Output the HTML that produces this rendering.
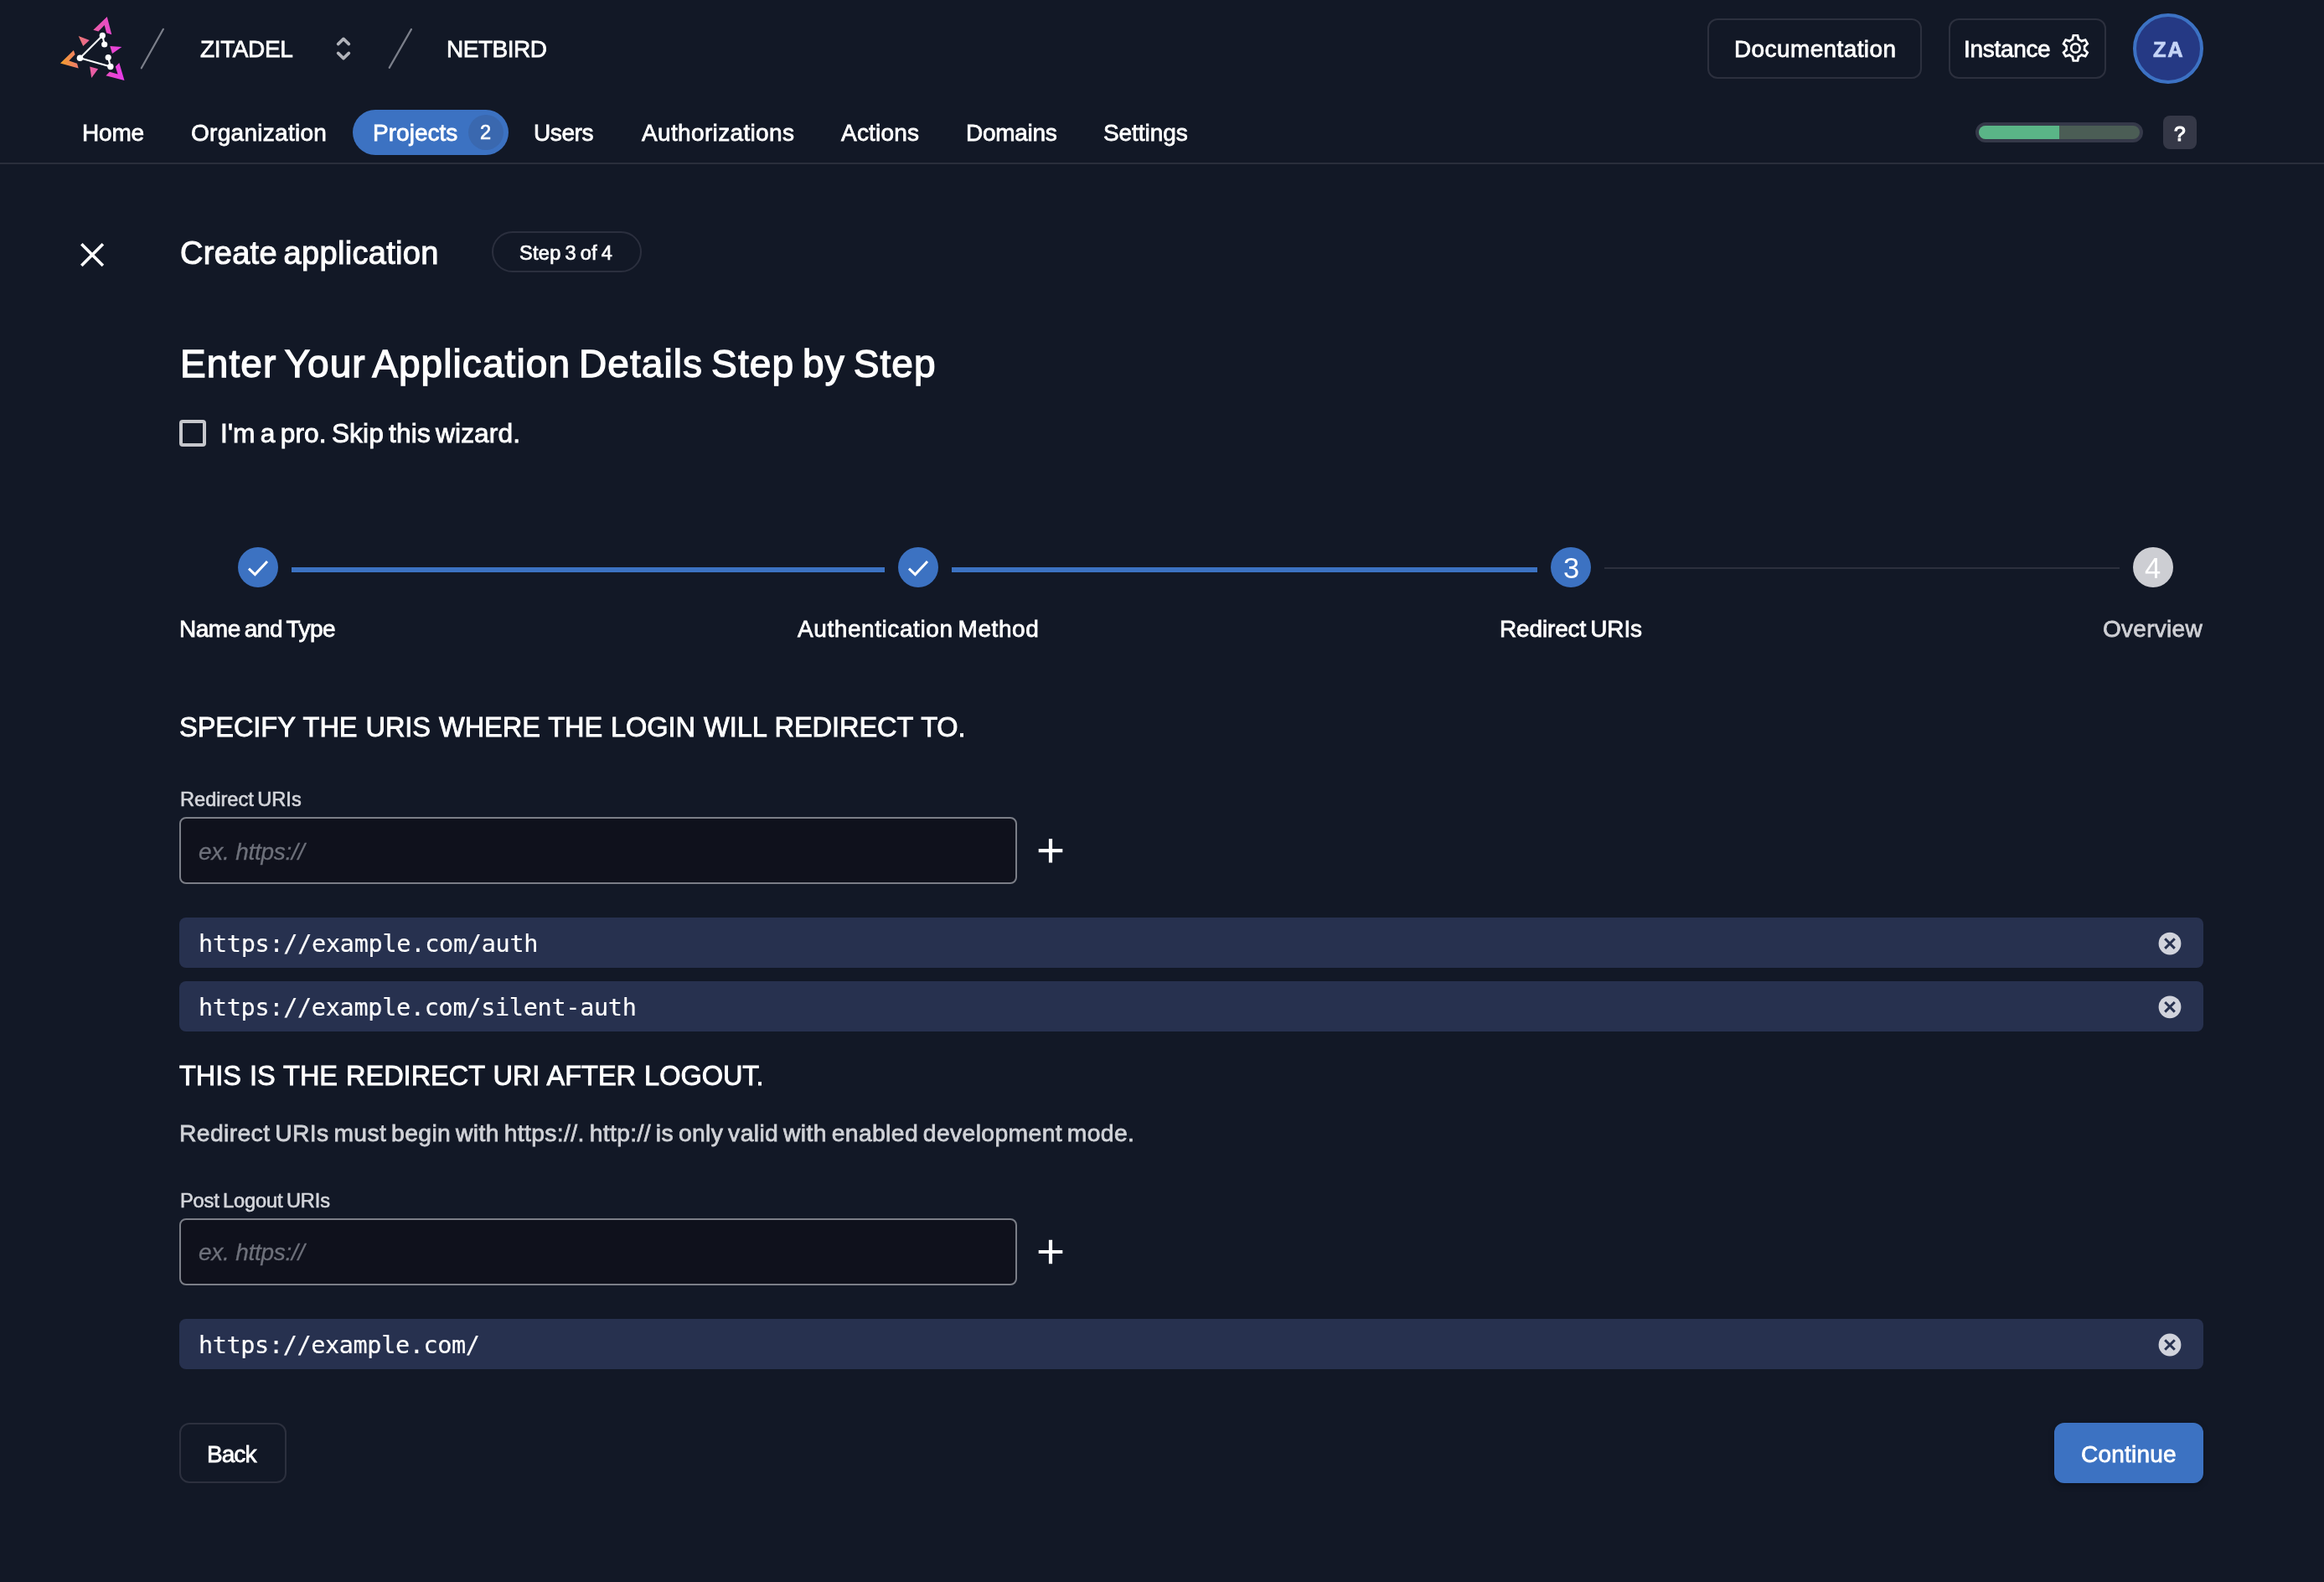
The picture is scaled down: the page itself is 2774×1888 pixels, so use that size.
<!DOCTYPE html>
<html lang="en">
<head>
<meta charset="utf-8">
<title>ZITADEL Console – Create application</title>
<style>
*{box-sizing:border-box;margin:0;padding:0}
html,body{width:2774px;height:1888px;overflow:hidden;background:#121826}
body{position:relative;font-family:"Liberation Sans",sans-serif;color:#fff;-webkit-font-smoothing:antialiased}
.abs,.t,svg.ic{position:absolute}
.t{white-space:nowrap;display:block;-webkit-text-stroke:0.6px currentColor;will-change:transform}
a{color:inherit;text-decoration:none}
h1,h2,h3,p,label{font-weight:400;font-size:inherit}
svg.ic{left:0;top:0;overflow:visible;pointer-events:none}
/* header */
.btn-o{position:absolute;top:22px;height:72px;border:2px solid #2c303e;border-radius:12px;background:transparent}
#btn-doc{left:2038px;width:256px}
#btn-inst{left:2326px;width:188px}
#avatar{left:2546px;top:15.8px;width:84px;height:84px;border-radius:50%;border:4px solid #3c72c4;background:#253984}
#pill{left:421px;top:131px;width:186px;height:54px;border-radius:27px;background:#3c72c2;}
#badge{left:559px;top:136.6px;width:42px;height:42px;border-radius:50%;background:#3a68af}
#prog{left:2358px;top:146px;width:200px;height:24px;border-radius:12px;border:4px solid #353949;background:#4b5d55;overflow:hidden}
#prog i{display:block;width:50%;height:100%;background:#5ab587}
#helpbtn{left:2582px;top:138px;width:40px;height:40px;border-radius:8px;background:#353847}
#hline{left:0;top:194px;width:2774px;height:2px;background:#2a2e3b}
/* main */
#steppill{left:587px;top:276px;width:179px;height:49px;border-radius:25px;border:2px solid #2b2f3e}
#cbx{left:214px;top:501px;width:32px;height:32px;border-radius:4px;border:4px solid #c6c7cc}
.sc{position:absolute;top:653px;width:48px;height:48px;border-radius:50%;background:#3c72c2}
.sc.g{background:#cdced3}
.sl{position:absolute;top:677px;height:6px;background:#3c72c2}
.sl.g{height:2px;background:#2c303d}
.inp{position:absolute;left:214px;width:1000px;height:80px;border:2px solid #7b7e87;border-radius:8px;background:#0f111c}
.row{position:absolute;left:214px;width:2416px;height:60px;border-radius:8px;background:#27314f}
#btn-back{left:214px;top:1698px;width:128px;height:72px;border:2px solid #2c303e;border-radius:12px}
#btn-cont{left:2452px;top:1698px;width:178px;height:72px;border-radius:12px;background:#3c72c2;box-shadow:0 3px 7px rgba(0,0,0,.28)}
#org{left:239px;top:42px;font-size:28px;line-height:34px;letter-spacing:-0.376px;-webkit-text-stroke-width:0.76px;}
#proj{left:533px;top:42px;font-size:28px;line-height:34px;letter-spacing:-0.492px;-webkit-text-stroke-width:0.76px;}
#doc{left:2070px;top:42px;font-size:28px;line-height:34px;letter-spacing:0.389px;-webkit-text-stroke-width:0.76px;}
#inst{left:2344px;top:42px;font-size:28px;line-height:34px;letter-spacing:-0.308px;-webkit-text-stroke-width:0.76px;}
#ava{left:2570px;top:44px;font-size:25.5px;line-height:31px;letter-spacing:1.579px;font-weight:700;color:#c5d4f7;-webkit-text-stroke-width:0.69px;}
#n1{left:98px;top:142px;font-size:28px;line-height:34px;letter-spacing:-0.165px;-webkit-text-stroke-width:0.76px;}
#n2{left:228px;top:142px;font-size:28px;line-height:34px;letter-spacing:0.285px;-webkit-text-stroke-width:0.76px;}
#n3{left:445px;top:142px;font-size:28px;line-height:34px;letter-spacing:0.025px;-webkit-text-stroke-width:0.76px;}
#n3b{left:573px;top:144px;font-size:23.5px;line-height:28px;-webkit-text-stroke-width:0.63px;}
#n4{left:637px;top:142px;font-size:28px;line-height:34px;letter-spacing:-0.399px;-webkit-text-stroke-width:0.76px;}
#n5{left:766px;top:142px;font-size:28px;line-height:34px;letter-spacing:0.345px;-webkit-text-stroke-width:0.76px;}
#n6{left:1004px;top:142px;font-size:28px;line-height:34px;letter-spacing:0.200px;-webkit-text-stroke-width:0.76px;}
#n7{left:1153px;top:142px;font-size:28px;line-height:34px;letter-spacing:-0.293px;-webkit-text-stroke-width:0.76px;}
#n8{left:1317px;top:142px;font-size:28px;line-height:34px;letter-spacing:-0.064px;-webkit-text-stroke-width:0.76px;}
#help{left:2595px;top:145px;font-size:24.5px;line-height:29px;-webkit-text-stroke-width:1.20px;}
#title{left:215px;top:279px;font-size:38px;line-height:46px;letter-spacing:0.315px;-webkit-text-stroke-width:1.03px;word-spacing:-3.23px;}
#step{left:620px;top:288px;font-size:23.5px;line-height:28px;letter-spacing:0.314px;-webkit-text-stroke-width:0.70px;word-spacing:-2.00px;}
#h1{left:215px;top:407px;font-size:46px;line-height:55px;letter-spacing:1.080px;-webkit-text-stroke-width:1.30px;word-spacing:-3.91px;}
#pro{left:263px;top:498px;font-size:31.7px;line-height:38px;letter-spacing:0.097px;-webkit-text-stroke-width:0.86px;word-spacing:-2.69px;}
#s1{left:214px;top:734px;font-size:28px;line-height:34px;letter-spacing:-0.476px;-webkit-text-stroke-width:0.76px;word-spacing:-2.38px;}
#s2{left:952px;top:734px;font-size:28px;line-height:34px;letter-spacing:0.577px;-webkit-text-stroke-width:0.76px;word-spacing:-2.38px;}
#s3{left:1790px;top:734px;font-size:28px;line-height:34px;letter-spacing:-0.155px;-webkit-text-stroke-width:0.76px;word-spacing:-2.38px;}
#s4{left:2510px;top:734px;font-size:28px;line-height:34px;letter-spacing:0.279px;color:#cfd0d5;-webkit-text-stroke-width:0.76px;}
#c3{left:1866px;top:658px;font-size:34.5px;line-height:41px;-webkit-text-stroke-width:0.00px;}
#c4{left:2560px;top:658px;font-size:34.5px;line-height:41px;-webkit-text-stroke-width:0.00px;}
#sec1{left:214px;top:849px;font-size:32.5px;line-height:39px;letter-spacing:-0.037px;-webkit-text-stroke-width:0.88px;word-spacing:1.00px;}
#l1{left:215px;top:940px;font-size:23.6px;line-height:28px;letter-spacing:-0.013px;color:#d4d6db;-webkit-text-stroke-width:0.64px;word-spacing:-2.01px;}
#p1{left:237px;top:1000px;font-size:28px;line-height:34px;letter-spacing:-0.249px;font-style:italic;color:#6e717b;-webkit-text-stroke-width:0.30px;}
#u1{left:237px;top:1110px;font-size:28.5px;line-height:34px;letter-spacing:-0.275px;font-family:"DejaVu Sans Mono", "Liberation Mono", monospace;-webkit-text-stroke-width:0.15px;}
#u2{left:237px;top:1186px;font-size:28.5px;line-height:34px;letter-spacing:-0.301px;font-family:"DejaVu Sans Mono", "Liberation Mono", monospace;-webkit-text-stroke-width:0.15px;}
#sec2{left:214px;top:1265px;font-size:32.5px;line-height:39px;letter-spacing:-0.016px;-webkit-text-stroke-width:0.88px;word-spacing:1.00px;}
#desc{left:214px;top:1335px;font-size:28.3px;line-height:34px;letter-spacing:0.375px;color:#d0d2d7;-webkit-text-stroke-width:0.76px;word-spacing:-2.41px;}
#l2{left:215px;top:1419px;font-size:23.6px;line-height:28px;letter-spacing:-0.128px;color:#d4d6db;-webkit-text-stroke-width:0.64px;word-spacing:-2.01px;}
#p2{left:237px;top:1478px;font-size:28px;line-height:34px;letter-spacing:-0.249px;font-style:italic;color:#6e717b;-webkit-text-stroke-width:0.30px;}
#u3{left:237px;top:1589px;font-size:28.5px;line-height:34px;letter-spacing:-0.378px;font-family:"DejaVu Sans Mono", "Liberation Mono", monospace;-webkit-text-stroke-width:0.15px;}
#back{left:247px;top:1719px;font-size:28px;line-height:34px;letter-spacing:-0.942px;-webkit-text-stroke-width:0.76px;}
#cont{left:2484px;top:1719px;font-size:28px;line-height:34px;letter-spacing:0.230px;-webkit-text-stroke-width:0.76px;}
</style>
</head>
<body>
<header>
  <svg class="ic" width="2774" height="200" viewBox="0 0 2774 200">
    <defs>
      <linearGradient id="lg" gradientUnits="userSpaceOnUse" x1="72" y1="60" x2="150" y2="60">
        <stop offset="0" stop-color="#f5a028"/>
        <stop offset="0.45" stop-color="#ea619c"/>
        <stop offset="1" stop-color="#e838ee"/>
      </linearGradient>
    </defs>
    <g fill="url(#lg)">
      <polygon points="127.8,20 111.3,35.8 117.5,37.5 124.7,30 127.1,39.3 133.3,41.3"/>
      <polygon points="72,75.4 87.9,59.9 89.6,65.1 82.4,72.6 92,75.7 93.7,81.6"/>
      <polygon points="148.5,96.1 142.3,75.1 137.8,79.5 140.6,88.5 130.9,85.7 126.4,90.2"/>
      <polygon points="93.7,43 106.8,47.9 99.2,55.1"/>
      <polygon points="131.3,55.1 145.4,56.1 134,64"/>
      <polygon points="107.2,79.5 117.1,82.3 109.2,93"/>
    </g>
    <g stroke="#fff" stroke-width="2.1" stroke-linecap="round" fill="none">
      <path d="M122.3 42.4L124.7 53M122.3 42.4L95.5 69.2L131.9 79.5L129.2 68.5"/>
    </g>
    <g fill="#fff">
      <circle cx="122.3" cy="42.4" r="3.6"/><circle cx="124.7" cy="53" r="3.6"/>
      <circle cx="95.5" cy="69.2" r="3.8"/><circle cx="129.2" cy="68.5" r="3.6"/>
      <circle cx="131.9" cy="79.5" r="3.7"/>
    </g>
    <g stroke="#7b7f8a" stroke-width="2.2" stroke-linecap="round">
      <line x1="194.9" y1="34.8" x2="168.8" y2="81.3"/>
      <line x1="491" y1="34.9" x2="464.7" y2="80.9"/>
    </g>
    <g stroke="#b1b3ba" stroke-width="3.6" stroke-linecap="round" stroke-linejoin="round" fill="none">
      <path d="M403.6 52.6L410 46.4L416.4 52.6"/>
      <path d="M403.6 63.4L410 69.6L416.4 63.4"/>
    </g>
    <path d="M2472.48 46.35L2473.71 41.01L2481.09 41.01L2482.32 46.35A12.1 12.1 0 0 1 2484.51 47.61L2489.75 46.01L2493.44 52.40L2489.43 56.14A12.1 12.1 0 0 1 2489.43 58.66L2493.44 62.40L2489.75 68.79L2484.51 67.19A12.1 12.1 0 0 1 2482.32 68.45L2481.09 73.79L2473.71 73.79L2472.48 68.45A12.1 12.1 0 0 1 2470.29 67.19L2465.05 68.79L2461.36 62.40L2465.37 58.66A12.1 12.1 0 0 1 2465.37 56.14L2461.36 52.40L2465.05 46.01L2470.29 47.61A12.1 12.1 0 0 1 2472.48 46.35ZM2475.10 48.08L2476.00 43.57L2478.80 43.57L2479.70 48.08A9.6 9.6 0 0 1 2484.32 50.75L2488.68 49.27L2490.08 51.70L2486.62 54.73A9.6 9.6 0 0 1 2486.62 60.07L2490.08 63.10L2488.68 65.53L2484.32 64.05A9.6 9.6 0 0 1 2479.70 66.72L2478.80 71.23L2476.00 71.23L2475.10 66.72A9.6 9.6 0 0 1 2470.48 64.05L2466.12 65.53L2464.72 63.10L2468.18 60.07A9.6 9.6 0 0 1 2468.18 54.73L2464.72 51.70L2466.12 49.27L2470.48 50.75A9.6 9.6 0 0 1 2475.10 48.08Z" fill="#fff" fill-rule="evenodd"/>
    <circle cx="2477.4" cy="57.4" r="5.2" fill="none" stroke="#fff" stroke-width="2.65"/>
  </svg>
  <a class="t" id="org">ZITADEL</a>
  <a class="t" id="proj">NETBIRD</a>
  <div class="btn-o" id="btn-doc"></div><a class="t" id="doc">Documentation</a>
  <div class="btn-o" id="btn-inst"></div><a class="t" id="inst">Instance</a>
  <div class="abs" id="avatar"></div><span class="t" id="ava">ZA</span>
</header>
<nav>
  <div class="abs" id="pill"></div><div class="abs" id="badge"></div>
  <a class="t" id="n1">Home</a>
  <a class="t" id="n2">Organization</a>
  <a class="t" id="n3">Projects</a><span class="t" id="n3b">2</span>
  <a class="t" id="n4">Users</a>
  <a class="t" id="n5">Authorizations</a>
  <a class="t" id="n6">Actions</a>
  <a class="t" id="n7">Domains</a>
  <a class="t" id="n8">Settings</a>
  <div class="abs" id="prog"><i></i></div>
  <div class="abs" id="helpbtn"></div><span class="t" id="help">?</span>
  <div class="abs" id="hline"></div>
</nav>
<main>
  <svg class="ic" width="2774" height="1888" viewBox="0 0 2774 1888">
    <g stroke="#fff" stroke-width="3.6" fill="none">
      <path d="M97.3 291.3L122.9 316.9M122.9 291.3L97.3 316.9"/>
    </g>
  </svg>
  <h1 class="t" id="title">Create application</h1>
  <div class="abs" id="steppill"></div><span class="t" id="step">Step 3 of 4</span>
  <h2 class="t" id="h1">Enter Your Application Details Step by Step</h2>
  <div class="abs" id="cbx"></div><label class="t" id="pro">I'm a pro. Skip this wizard.</label>

  <section id="stepper">
    <div class="sc" style="left:284px"></div>
    <div class="sl" style="left:348px;width:708px"></div>
    <div class="sc" style="left:1072px"></div>
    <div class="sl" style="left:1136px;width:699px"></div>
    <div class="sc" style="left:1851px"></div>
    <div class="sl g" style="left:1915px;width:615px"></div>
    <div class="sc g" style="left:2546px"></div>
    <svg class="ic" width="2774" height="1888" viewBox="0 0 2774 1888">
      <g stroke="#fff" stroke-width="3" fill="none">
        <path d="M297 678.6L304.4 685.6L319 670"/>
        <path d="M1085 678.6L1092.4 685.6L1107 670"/>
      </g>
    </svg>
    <span class="t" id="c3">3</span><span class="t" id="c4">4</span>
    <span class="t" id="s1">Name and Type</span>
    <span class="t" id="s2">Authentication Method</span>
    <span class="t" id="s3">Redirect URIs</span>
    <span class="t" id="s4">Overview</span>
  </section>

  <section id="redirects">
    <h3 class="t" id="sec1">SPECIFY THE URIS WHERE THE LOGIN WILL REDIRECT TO.</h3>
    <label class="t" id="l1">Redirect URIs</label>
    <div class="inp" style="top:975.4px"></div><span class="t" id="p1">ex. https://</span>
    <div class="row" style="top:1094.7px"></div><span class="t" id="u1">https://example.com/auth</span>
    <div class="row" style="top:1171px"></div><span class="t" id="u2">https://example.com/silent-auth</span>
  </section>

  <section id="logout">
    <h3 class="t" id="sec2">THIS IS THE REDIRECT URI AFTER LOGOUT.</h3>
    <p class="t" id="desc">Redirect URIs must begin with https://. http:// is only valid with enabled development mode.</p>
    <label class="t" id="l2">Post Logout URIs</label>
    <div class="inp" style="top:1454px"></div><span class="t" id="p2">ex. https://</span>
    <div class="row" style="top:1574px"></div><span class="t" id="u3">https://example.com/</span>
  </section>

  <svg class="ic" width="2774" height="1888" viewBox="0 0 2774 1888">
    <g stroke="#fff" stroke-width="4.2" fill="none">
      <path d="M1239.7 1015.2H1268.3M1254 1000.9V1029.5"/>
      <path d="M1239.7 1494H1268.3M1254 1479.7V1508.3"/>
    </g>
    <g fill="#d1d3dc">
      <circle cx="2590" cy="1126.1" r="13.4"/><circle cx="2590" cy="1201.8" r="13.4"/><circle cx="2590" cy="1605" r="13.4"/>
    </g>
    <g stroke="#27314f" stroke-width="3" fill="none">
      <path d="M2584.2 1120.3L2595.8 1131.9M2595.8 1120.3L2584.2 1131.9"/>
      <path d="M2584.2 1196L2595.8 1207.6M2595.8 1196L2584.2 1207.6"/>
      <path d="M2584.2 1599.2L2595.8 1610.8M2595.8 1599.2L2584.2 1610.8"/>
    </g>
  </svg>

  <div class="abs" id="btn-back"></div><span class="t" id="back">Back</span>
  <div class="abs" id="btn-cont"></div><span class="t" id="cont">Continue</span>
</main>
</body>
</html>
